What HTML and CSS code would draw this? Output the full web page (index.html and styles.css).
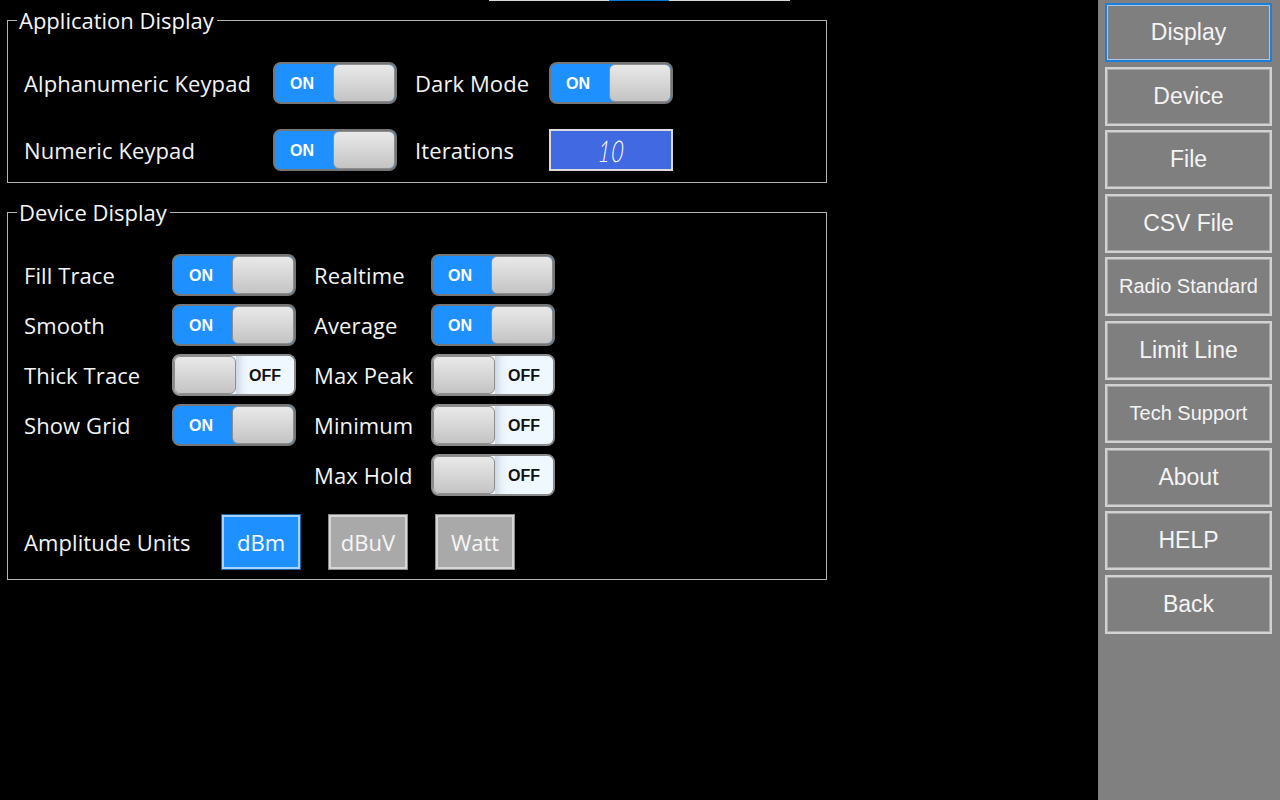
FILE: index.html
```html
<!DOCTYPE html>
<html>
<head>
<meta charset="utf-8">
<link rel="stylesheet" href="styles.css">
</head>
<body>
<div class="app">
  <main class="content">
    <div class="tabstrip"><span class="tab-active"></span></div>

    <fieldset class="group">
      <legend>Application Display</legend>
      <div class="grid app-grid">
        <span class="label">Alphanumeric Keypad</span>
        <div class="toggle on"><span class="track">ON</span><span class="knob"></span></div>
        <span class="label col3">Dark Mode</span>
        <div class="toggle on"><span class="track">ON</span><span class="knob"></span></div>

        <span class="label">Numeric Keypad</span>
        <div class="toggle on"><span class="track">ON</span><span class="knob"></span></div>
        <span class="label col3">Iterations</span>
        <div class="digital"><span>10</span></div>
      </div>
    </fieldset>

    <fieldset class="group">
      <legend>Device Display</legend>
      <div class="grid dev-grid">
        <span class="label">Fill Trace</span>
        <div class="toggle on"><span class="track">ON</span><span class="knob"></span></div>
        <span class="label col3">Realtime</span>
        <div class="toggle on"><span class="track">ON</span><span class="knob"></span></div>

        <span class="label">Smooth</span>
        <div class="toggle on"><span class="track">ON</span><span class="knob"></span></div>
        <span class="label col3">Average</span>
        <div class="toggle on"><span class="track">ON</span><span class="knob"></span></div>

        <span class="label">Thick Trace</span>
        <div class="toggle off"><span class="knob"></span><span class="track">OFF</span></div>
        <span class="label col3">Max Peak</span>
        <div class="toggle off"><span class="knob"></span><span class="track">OFF</span></div>

        <span class="label">Show Grid</span>
        <div class="toggle on"><span class="track">ON</span><span class="knob"></span></div>
        <span class="label col3">Minimum</span>
        <div class="toggle off"><span class="knob"></span><span class="track">OFF</span></div>

        <span class="label col3 start3">Max Hold</span>
        <div class="toggle off"><span class="knob"></span><span class="track">OFF</span></div>
      </div>

      <div class="units">
        <span class="label units-label">Amplitude Units</span>
        <button class="unit active">dBm</button>
        <button class="unit">dBuV</button>
        <button class="unit">Watt</button>
      </div>
    </fieldset>
  </main>

  <nav class="sidebar">
    <button class="nav selected">Display</button>
    <button class="nav">Device</button>
    <button class="nav">File</button>
    <button class="nav">CSV File</button>
    <button class="nav small">Radio Standard</button>
    <button class="nav">Limit Line</button>
    <button class="nav small">Tech Support</button>
    <button class="nav">About</button>
    <button class="nav">HELP</button>
    <button class="nav">Back</button>
  </nav>
</div>
</body>
</html>
```

FILE: styles.css
```css
html, body {
  margin: 0;
  padding: 0;
  background: #000;
}

body {
  font-family: "Open Sans", "Noto Sans", sans-serif;
  color: #f4f4f4;
}

.app {
  display: flex;
  width: 1280px;
  height: 800px;
  overflow: hidden;
}

.content {
  width: 1098px;
  flex: none;
}

.tabstrip {
  margin-left: 489px;
  width: 301px;
  height: 1px;
  background: #d9d9d9;
  display: flex;
  padding-left: 120px;
  box-sizing: border-box;
}

.tab-active {
  width: 60px;
  background: #0a78d7;
}

.group {
  margin: 7px 0 0 7px;
  width: 820px;
  box-sizing: border-box;
  border: 1px solid #b4b4b4;
  padding: 30px 0 11px 9px;
  min-inline-size: 0;
}

.group + .group {
  margin-top: 17px;
  padding-bottom: 10px;
}

.group legend {
  padding: 0 3px 0 2px;
  font-size: 22px;
  line-height: 24px;
  color: #f6f6f6;
}

.grid {
  display: grid;
  align-items: center;
  padding-left: 7px;
}

.app-grid {
  grid-template-columns: 249px 124px 152px 124px;
  grid-auto-rows: 42px;
  row-gap: 25px;
}

.dev-grid {
  grid-template-columns: 148px 124px 135px 124px;
  grid-auto-rows: 42px;
  row-gap: 8px;
}

.label {
  font-size: 22px;
  line-height: 28px;
  letter-spacing: 0.1px;
  white-space: nowrap;
  color: #f4f4f4;
}

.col3 {
  padding-left: 18px;
}

.start3 {
  grid-column: 3;
}

/* toggle switch */
.toggle {
  display: flex;
  width: 124px;
  height: 42px;
  box-sizing: border-box;
  border: 2px solid #767676;
  border-radius: 8px;
  overflow: hidden;
  background: #1e90ff;
}

.toggle .track {
  flex: 1;
  display: flex;
  align-items: center;
  justify-content: center;
  padding-top: 2px;
  font-family: "Liberation Sans", Arial, sans-serif;
  font-weight: bold;
  font-size: 16px;
}

.toggle.on .track {
  background: #1e90ff;
  color: #fff;
  padding-right: 4px;
}

.toggle.off {
  background: #f0f8ff;
  border-color: #8a8a8a;
}

.toggle.off .track {
  background: linear-gradient(to right, #cfd8e2 0, #e9f2fb 7px, #f0f8ff 14px);
  color: #111;
}

.toggle .knob {
  width: 62px;
  flex: none;
  box-sizing: border-box;
  border: 1px solid #8e8e8e;
  border-radius: 6px;
  background: linear-gradient(#e9e9e9, #c4c4c4);
}

/* iterations display */
.digital {
  width: 124px;
  height: 42px;
  box-sizing: border-box;
  border: 2px solid #dcdcdc;
  background: #4169e1;
  display: flex;
  align-items: center;
  justify-content: center;
}

.digital span {
  font-family: "Lato", "DejaVu Sans", sans-serif;
  font-weight: 300;
  font-style: italic;
  font-size: 30px;
  line-height: 30px;
  letter-spacing: 1px;
  color: #fff;
  transform: scaleX(0.72) skewX(-6deg);
}

/* amplitude units */
.units {
  display: flex;
  align-items: center;
  margin-top: 19px;
  padding-left: 7px;
  gap: 29px;
}

.units-label {
  width: 198px;
  margin-right: -29px;
}

.unit {
  width: 78px;
  height: 54px;
  box-sizing: border-box;
  font-family: "Open Sans", "Noto Sans", sans-serif;
  font-size: 22px;
  color: #f6f6f6;
  background: #a9a9a9;
  border: 2px solid #d6d6d6;
  box-shadow: 0 0 0 1px #8a8a8a;
  padding: 0;
}

.unit.active {
  background: #1e90ff;
  border-color: #a6d3ff;
  box-shadow: 0 0 0 1px #1b5fa6;
  color: #fff;
}

/* sidebar */
.sidebar {
  width: 182px;
  flex: none;
  background: #808080;
  box-sizing: border-box;
  padding: 3px 8px 0 7px;
  display: flex;
  flex-direction: column;
  gap: 4.5px;
}

.nav {
  height: 59px;
  flex: none;
  width: 100%;
  box-sizing: border-box;
  background: #7f7f7f;
  border: 2px solid #d2d2d2;
  box-shadow: inset 0 0 0 1px #a9a9a9;
  color: #f4f4f4;
  font-family: "Liberation Sans", Arial, sans-serif;
  font-size: 23px;
  padding: 0;
}

.nav.small {
  font-size: 20px;
}

.nav.selected {
  border-color: #1f7fd6;
  box-shadow: inset 0 0 0 1px #a9c8e6;
}
```
